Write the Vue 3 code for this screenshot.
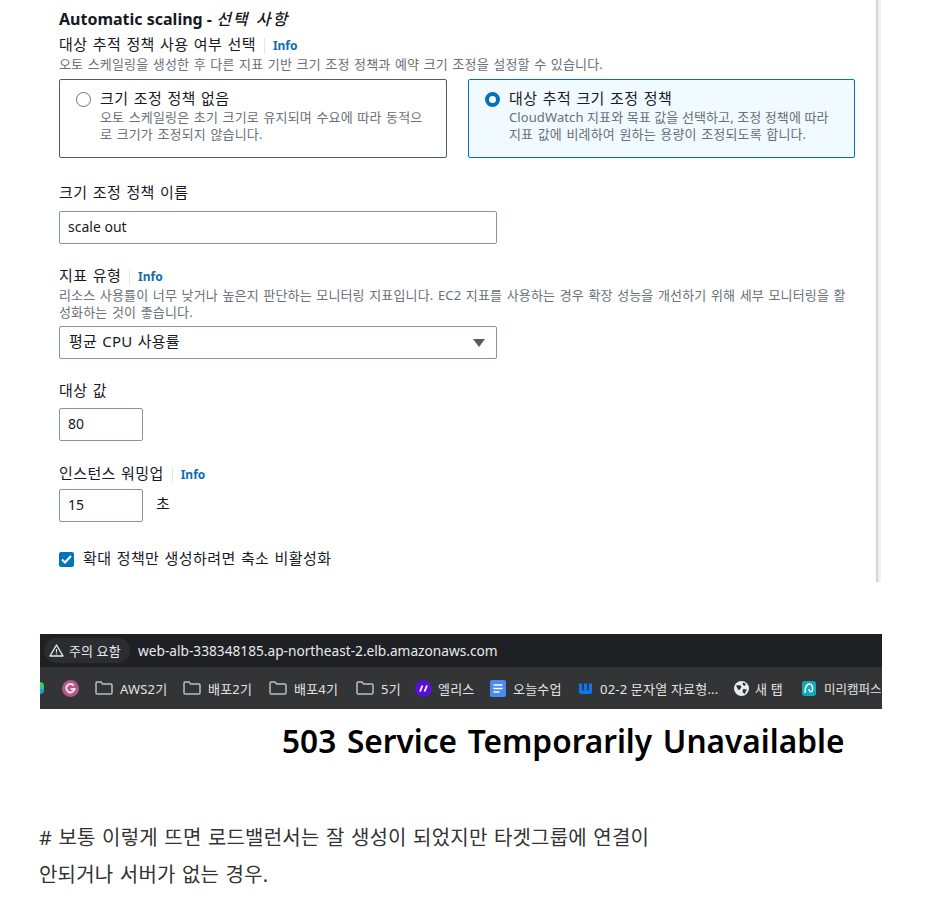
<script setup>
const bookmarks = [
  { label: 'AWS2기', w: 88 },
  { label: '배포2기', w: 86 },
  { label: '배포4기', w: 87 },
  { label: '5기', w: 59 },
]
</script>

<template>
  <div class="page">
    <section class="panel">
      <div class="form">
        <h2 class="heading">Automatic scaling - <em>선택 사항</em></h2>
        <div class="label-row sub">
          <span class="label">대상 추적 정책 사용 여부 선택</span><a class="info">Info</a>
        </div>
        <p class="desc one">오토 스케일링을 생성한 후 다른 지표 기반 크기 조정 정책과 예약 크기 조정을 설정할 수 있습니다.</p>
        <div class="cards">
          <div class="card">
            <span class="radio"></span>
            <div>
              <div class="card-title">크기 조정 정책 없음</div>
              <div class="card-text">오토 스케일링은 초기 크기로 유지되며 수요에 따라 동적으<br />로 크기가 조정되지 않습니다.</div>
            </div>
          </div>
          <div class="card active">
            <span class="radio on"></span>
            <div>
              <div class="card-title">대상 추적 크기 조정 정책</div>
              <div class="card-text"><span class="tight">CloudWatch 지표와 목표 값을 선택하고, 조정 정책에 따라</span><br />지표 값에 비례하여 원하는 용량이 조정되도록 합니다.</div>
            </div>
          </div>
        </div>

        <div class="label-row name-label"><span class="label">크기 조정 정책 이름</span></div>
        <div class="input wide">scale out</div>

        <div class="label-row metric-label">
          <span class="label">지표 유형</span><a class="info">Info</a>
        </div>
        <p class="desc metric-desc">리소스 사용률이 너무 낮거나 높은지 판단하는 모니터링 지표입니다. EC2 지표를 사용하는 경우 확장 성능을 개선하기 위해 세부 모니터링을 활<br />성화하는 것이 좋습니다.</p>
        <div class="input wide select">
          <span class="select-text">평균 CPU 사용률</span>
          <svg width="12" height="8" viewBox="0 0 12 8"><path d="M0 0h12L6 8z" fill="#545b64" /></svg>
        </div>

        <div class="label-row target-label"><span class="label">대상 값</span></div>
        <div class="input small">80</div>

        <div class="label-row warm-label">
          <span class="label">인스턴스 워밍업</span><a class="info">Info</a>
        </div>
        <div class="warm-row">
          <div class="input small">15</div>
          <span class="unit">초</span>
        </div>

        <div class="check-row">
          <span class="check">
            <svg width="11" height="9" viewBox="0 0 11 9"><path d="M1 4.5 4 7.5 10 1" fill="none" stroke="#fff" stroke-width="2" /></svg>
          </span>
          <span class="label">확대 정책만 생성하려면 축소 비활성화</span>
        </div>
      </div>
    </section>

    <section class="browser">
      <div class="addr">
        <div class="warn">
          <svg width="15" height="13" viewBox="0 0 15 13"><path d="M7.5 1 14 12H1z" fill="none" stroke="#e8eaed" stroke-width="1.4" stroke-linejoin="round" /><path d="M7.5 5v3.4M7.5 9.4v1.2" stroke="#e8eaed" stroke-width="1.2" /></svg>
          <span>주의 요함</span>
        </div>
        <span class="url">web-alb-338348185.ap-northeast-2.elb.amazonaws.com</span>
      </div>
      <div class="bars">
        <span class="edge"></span>
        <span class="g-icon">
          <svg width="17" height="17" viewBox="0 0 17 17"><circle cx="8.5" cy="8.5" r="8.5" fill="#b0588c" /><path d="M11.8 5.6A4.2 4.2 0 1 0 12.6 9H8.6" fill="none" stroke="#f3dfe9" stroke-width="2" /></svg>
        </span>
        <span v-for="b in bookmarks" :key="b.label" class="bm" :style="{ width: b.w + 'px' }">
          <svg width="18" height="14" viewBox="0 0 18 14"><path d="M1 12V2.2A1.2 1.2 0 0 1 2.2 1H6l1.6 2h8.2A1.2 1.2 0 0 1 17 4.2V12a1.2 1.2 0 0 1-1.2 1H2.2A1.2 1.2 0 0 1 1 12z" fill="none" stroke="#bdbdbd" stroke-width="1.5" /></svg>
          <span>{{ b.label }}</span>
        </span>
        <span class="bm elice">
          <svg width="17" height="17" viewBox="0 0 17 17"><circle cx="8.5" cy="8.5" r="8.5" fill="#5a0fd6" /><path d="M5 11.5 7.5 5.5M9.5 11.5 12 5.5" stroke="#fff" stroke-width="1.8" /></svg>
          <span>엘리스</span>
        </span>
        <span class="bm today">
          <svg width="16" height="17" viewBox="0 0 16 17"><rect width="16" height="17" rx="2" fill="#4a8af4" /><path d="M3.5 5h9M3.5 8.5h9M3.5 12h6" stroke="#fff" stroke-width="1.5" /></svg>
          <span>오늘수업</span>
        </span>
        <span class="bm w">
          <svg width="13" height="13" viewBox="0 0 13 13"><path d="M0 1.5h3.2v7h1.7v-7h3.2v7h1.7v-7H13V10a2 2 0 0 1-2 2H2a2 2 0 0 1-2-2z" fill="#0a78f0" /></svg>
          <span>02-2 문자열 자료형...</span>
        </span>
        <span class="bm tab">
          <svg width="15" height="15" viewBox="0 0 15 15"><circle cx="7.5" cy="7.5" r="7.5" fill="#ececec" /><path d="M2 4.5 6 4l1.5 2L5.5 9 4 8.5zM9 1.5l3 1.5-1.5 2L8.5 3.5zM9 8l4 .5-2.5 4.5L8.5 11z" fill="#333" /></svg>
          <span>새 탭</span>
        </span>
        <span class="bm miri">
          <svg width="14" height="15" viewBox="0 0 14 15"><rect width="14" height="15" rx="3" fill="#12a8b8" /><path d="M3 12C3 6 5 3 7.5 3S11 6 10.5 9 7 11 7 8" fill="none" stroke="#fff" stroke-width="1.4" /></svg>
          <span class="miri-text">미리캠퍼스</span>
        </span>
      </div>
    </section>

    <h1 class="err">503 Service Temporarily Unavailable</h1>

    <p class="note"># 보통 이렇게 뜨면 로드밸런서는 잘 생성이 되었지만 타겟그룹에 연결이<br />안되거나 서버가 없는 경우.</p>
  </div>
</template>

<style scoped>
.page {
  width: 931px;
  height: 908px;
  overflow: hidden;
  background: #fff;
  font-family: "Noto Sans", "Noto Sans CJK KR", sans-serif;
  color: #16191f;
}
p, h1, h2 { margin: 0; }

.panel {
  width: 881px;
  height: 582px;
  box-sizing: border-box;
  border-right: 3px solid #f1f1f1;
  position: relative;
}
.panel::after {
  content: "";
  position: absolute;
  top: 0;
  bottom: 0;
  right: 0;
  width: 2px;
  background: #d5d5d5;
}
.form { padding: 9px 0 0 59px; }

.heading {
  font-size: 16px;
  line-height: 20px;
  font-weight: 700;
  color: #16191f;
}
.heading em { font-style: italic; font-weight: 500; letter-spacing: 2px; }

.label-row { display: flex; align-items: center; }
.label,
.card-title,
.select-text,
.unit {
  font-size: 15px;
  line-height: 20px;
  letter-spacing: .4px;
  word-spacing: 1px;
  color: #16191f;
}
.info {
  font-size: 12px;
  font-weight: 700;
  line-height: 16px;
  color: #0f6cb0;
  margin-left: 8px;
  padding-left: 8px;
  border-left: 1px solid #e4e6e8;
  margin-top: 3px;
}
.sub { margin-top: 5px; height: 20px; }
.desc,
.card-text {
  font-size: 13px;
  line-height: 17px;
  letter-spacing: .15px;
  word-spacing: 1px;
  color: #687078;
  white-space: nowrap;
}
.tight { word-spacing: 0; letter-spacing: .1px; }
.one { margin-top: 2px; }

.cards { display: grid; grid-template-columns: 388px 387px; gap: 21px; margin-top: 6px; }
.card {
  height: 79px;
  box-sizing: border-box;
  border: 1px solid #545b64;
  border-radius: 2px;
  padding: 8px 16px;
  display: flex;
  gap: 9px;
}
.card.active { border-color: #0073bb; background: #f1faff; }
.radio {
  width: 15px;
  height: 15px;
  box-sizing: border-box;
  border: 1.5px solid #687078;
  border-radius: 50%;
  background: #fff;
  margin-top: 4px;
  flex: none;
}
.radio.on { border: 4.5px solid #0073bb; }
.card-text { margin-top: 1px; }

.input {
  height: 33px;
  box-sizing: border-box;
  border: 1px solid #879596;
  border-radius: 2px;
  font-size: 14px;
  line-height: 29px;
  padding: 0 8px;
  background: #fff;
}
.wide { width: 438px; }
.small { width: 84px; }
.select {
  display: flex;
  justify-content: space-between;
  align-items: center;
  padding: 0 11px 0 9px;
}
.select-text { margin-top: -3px; letter-spacing: .25px; }
.name-label { margin-top: 24px; }
.name-label + .input { margin-top: 9px; }
.metric-label { margin-top: 21px; }
.metric-desc { margin-top: 2px; }
.metric-desc + .input { margin-top: 5px; }
.target-label { margin-top: 21px; }
.target-label + .input { margin-top: 8px; }
.warm-label { margin-top: 22px; }
.warm-row { display: flex; margin-top: 6px; }
.unit { margin-left: 13px; margin-top: 4px; }
.check-row { display: flex; align-items: center; gap: 9px; margin-top: 26px; }
.check {
  width: 15px;
  height: 15px;
  border-radius: 2px;
  background: #0073bb;
  display: flex;
  align-items: center;
  justify-content: center;
  margin-top: 2px;
}

.browser { width: 842px; margin: 52px 0 0 40px; }
.addr {
  height: 33px;
  background: #1f2024;
  display: flex;
  align-items: center;
  padding-left: 4px;
}
.warn {
  height: 25px;
  width: 86px;
  box-sizing: border-box;
  background: #2c2d31;
  border-radius: 13px;
  display: flex;
  align-items: center;
  gap: 5px;
  padding-left: 5px;
  color: #e8eaed;
  font-size: 13px;
  letter-spacing: .1px;
  white-space: nowrap;
}
.url { color: #e8eaed; font-size: 13.7px; margin-left: 8px; }
.bars {
  height: 42px;
  background: #333436;
  display: flex;
  align-items: center;
  color: #e3e3e3;
  font-size: 13px;
  letter-spacing: .2px;
  white-space: nowrap;
  overflow: hidden;
}
.edge {
  width: 4px;
  height: 12px;
  border-radius: 0 4px 4px 0;
  background: linear-gradient(#2fce6a 55%, #1ca0d8 55%);
  flex: none;
}
.g-icon { margin-left: 18px; margin-right: 16px; display: flex; }
.bm { display: flex; align-items: center; gap: 7px; flex: none; }
.elice { width: 75px; gap: 6px; }
.today { width: 89px; }
.w { width: 155px; gap: 8px; }
.tab { width: 68px; gap: 6px; }
.bm.miri { gap: 8px; }
.miri-text { font-size: 12.5px; letter-spacing: 0; }

.err {
  font-size: 31.6px;
  line-height: 44px;
  font-weight: 600;
  color: #000;
  margin: 10px 0 0 282px;
  word-spacing: 2.5px;
  white-space: nowrap;
}
.note {
  font-size: 20px;
  line-height: 37px;
  letter-spacing: .2px;
  word-spacing: 1px;
  color: #333;
  margin: 56px 0 0 39px;
}
</style>
